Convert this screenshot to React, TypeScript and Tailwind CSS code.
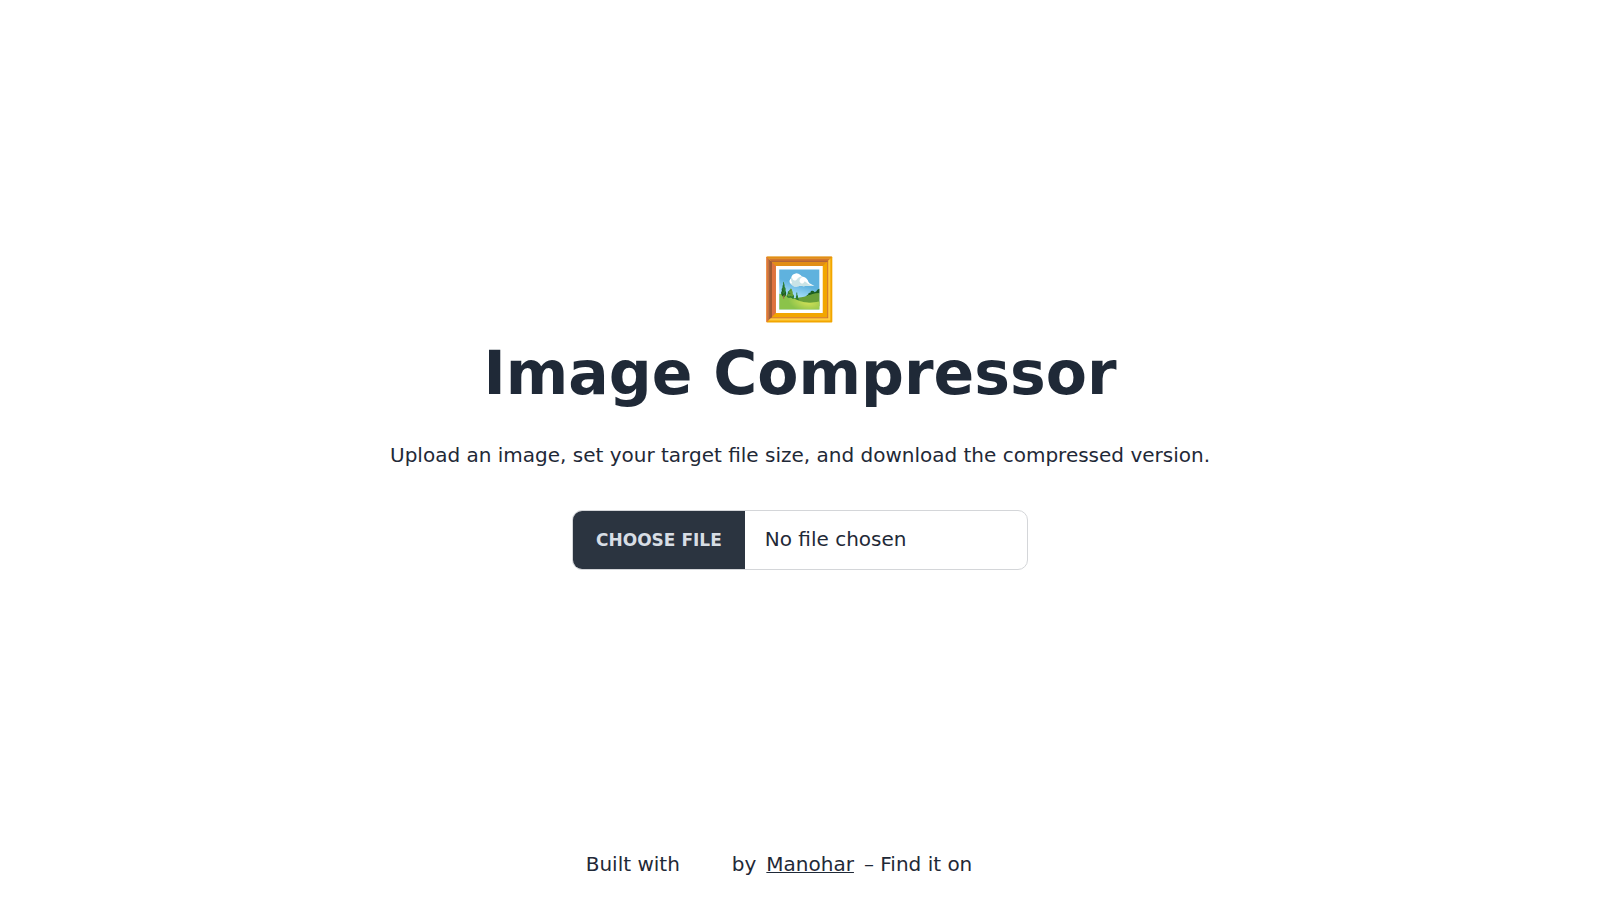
export default function App() {
  return (
    <div className="flex min-h-screen flex-col items-center bg-white font-['DejaVu_Sans',sans-serif] text-xl text-[#1f2937]">
      <main className="flex grow flex-col items-center justify-center pb-3 text-center">
        <h1 className="text-6xl leading-[84px] font-bold"><span className="block">🖼️</span>Image Compressor</h1>
        <p className="pt-[26px] pb-[41px]">Upload an image, set your target file size, and download the compressed version.</p>
        <input type="file" aria-label="Image" className="h-[60px] w-[456px] rounded-[10px] border border-[#d4d6d9] pr-4 text-xl leading-[52px] file:mr-5 file:h-full file:bg-[#2b3440] file:px-[23px] file:text-[17px] file:font-semibold file:uppercase file:text-[#d7dde4]" />
      </main>
      <footer className="flex gap-2.5 py-[22px]">
        <p>Built with</p>
        <span className="w-8" />
        <p>by</p>
        <a href="#" className="underline decoration-1">Manohar</a>
        <p>– Find it on</p>
        <span className="w-8" />
      </footer>
    </div>
  );
}
